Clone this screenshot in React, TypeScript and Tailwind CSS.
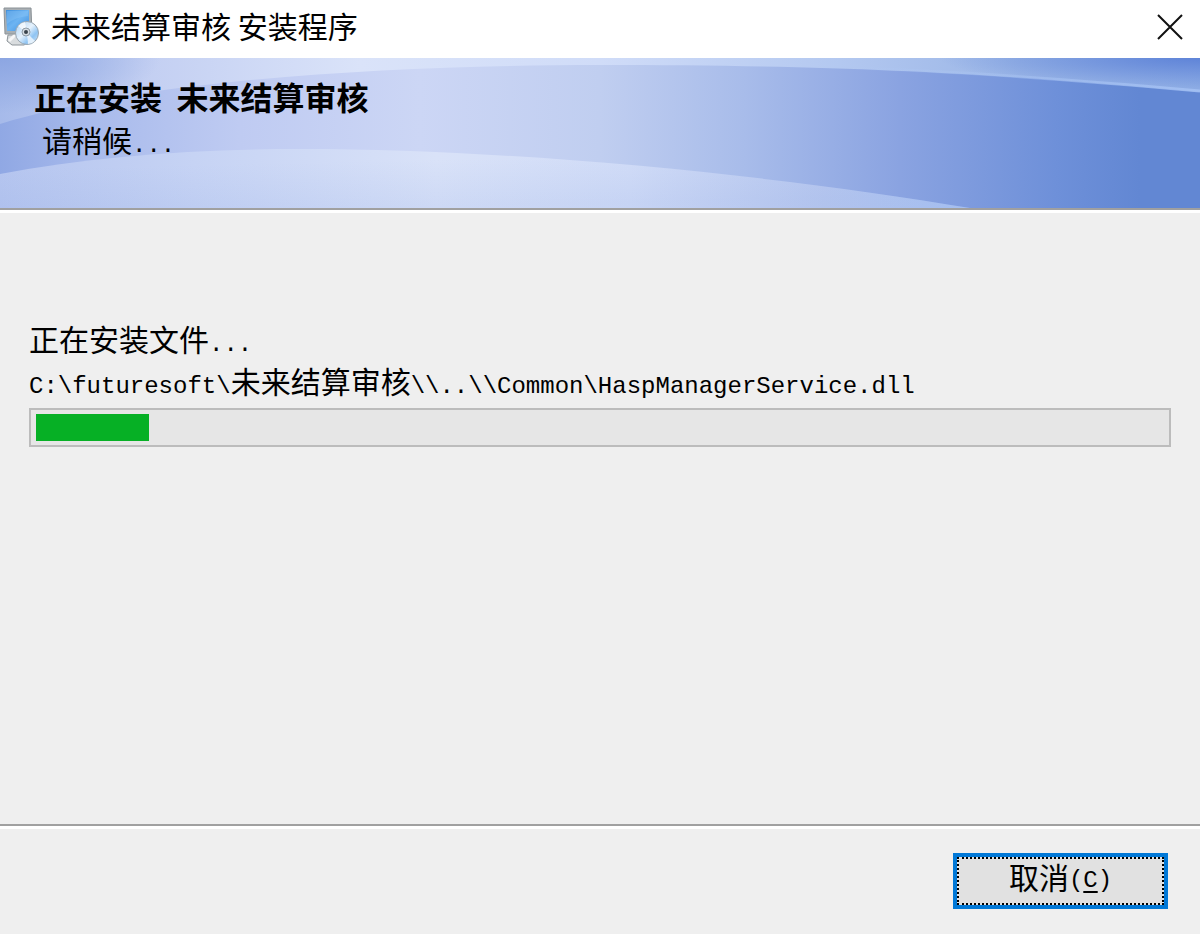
import { ReactNode } from 'react';

const INSTALL_PROGRESS = 10;

function Latin({ children }: { children: ReactNode }) {
  return <span className="text-[24px]">{children}</span>;
}

function SetupIcon() {
  return (
    <svg viewBox="0 0 36 40" className="h-10 w-9 shrink-0" aria-hidden="true">
      <defs>
        <linearGradient id="screen" x1="0" y1="0" x2="1" y2="1">
          <stop offset="0" stopColor="#3f8fdc" />
          <stop offset="0.5" stopColor="#6db4f2" />
          <stop offset="1" stopColor="#3d8ede" />
        </linearGradient>
        <linearGradient id="disc" x1="0" y1="0" x2="1" y2="1">
          <stop offset="0" stopColor="#a9d0f4" />
          <stop offset="0.45" stopColor="#e6f2fc" />
          <stop offset="0.7" stopColor="#8fc4f3" />
          <stop offset="1" stopColor="#d3e6f6" />
        </linearGradient>
      </defs>
      <path d="M5 28h14l5 8-3 2H9l-5-4z" fill="#d9dcde" stroke="#8d9499" strokeWidth="1" />
      <path d="M13 27 6 34" stroke="#f7f7f7" strokeWidth="3" />
      <path d="M1 1h27l1 26H2z" fill="#a9afb3" stroke="#8b9297" strokeWidth="1" />
      <path d="M3 3h23v21H4z" fill="url(#screen)" />
      <path d="M4 4h21v5Q12 10 4 17z" fill="#8cc6f7" opacity="0.4" />
      <circle cx="24" cy="26" r="11.5" fill="url(#disc)" stroke="#9aa5ae" strokeWidth="1" />
      <path d="M24 26 15 19a11 11 0 0 1 7-4z" fill="#fff" opacity="0.7" />
      <path d="M24 26 32 34a11 11 0 0 1-7 3z" fill="#fff" opacity="0.7" />
      <circle cx="23" cy="25" r="4" fill="#d5dce2" stroke="#8d9aa5" strokeWidth="1" />
      <circle cx="23" cy="25" r="2" fill="#39434b" />
    </svg>
  );
}

function BannerWaves() {
  return (
    <svg
      viewBox="0 0 1200 150"
      preserveAspectRatio="none"
      className="absolute inset-0 h-full w-full"
      aria-hidden="true"
    >
      <defs>
        <linearGradient id="base">
          <stop offset="0" stopColor="#90a8e4" />
          <stop offset="0.08" stopColor="#a9bbec" />
          <stop offset="0.2" stopColor="#bfcbf2" />
          <stop offset="0.35" stopColor="#ccd6f5" />
          <stop offset="0.5" stopColor="#c0cef0" />
          <stop offset="0.62" stopColor="#a8bcea" />
          <stop offset="0.75" stopColor="#8aa3e1" />
          <stop offset="0.88" stopColor="#6e90d9" />
          <stop offset="0.95" stopColor="#6287d3" />
          <stop offset="1" stopColor="#6287d3" />
        </linearGradient>
        <linearGradient id="top">
          <stop offset="0" stopColor="#a6baea" />
          <stop offset="0.12" stopColor="#c3cff2" />
          <stop offset="0.3" stopColor="#dae3f9" />
          <stop offset="0.5" stopColor="#d0dcf8" />
          <stop offset="0.7" stopColor="#b3c8f0" />
          <stop offset="0.85" stopColor="#9ab5e6" />
          <stop offset="1" stopColor="#8cabe4" />
        </linearGradient>
        {/* darker corners along the top edge */}
        <radialGradient id="cornerRight" gradientUnits="userSpaceOnUse" cx="0" cy="0" r="1" gradientTransform="translate(1200 0) scale(260 30)">
          <stop offset="0" stopColor="#5f84d8" />
          <stop offset="1" stopColor="#5f84d8" stopOpacity="0" />
        </radialGradient>
        <radialGradient id="cornerLeft" gradientUnits="userSpaceOnUse" cx="0" cy="0" r="1" gradientTransform="scale(160 55)">
          <stop offset="0" stopColor="#8ca6e2" />
          <stop offset="1" stopColor="#8ca6e2" stopOpacity="0" />
        </radialGradient>
        <linearGradient id="bottom">
          <stop offset="0" stopColor="#b5c5ef" />
          <stop offset="0.2" stopColor="#c6d3f4" />
          <stop offset="0.45" stopColor="#d9e2f8" />
          <stop offset="0.65" stopColor="#d1dcf7" />
          <stop offset="0.85" stopColor="#b8c8ef" />
          <stop offset="1" stopColor="#a8c2f2" />
        </linearGradient>
        <linearGradient id="bottomShade" x1="0" y1="0" x2="0.35" y2="1">
          <stop offset="0" stopColor="#8ba6e4" stopOpacity="0" />
          <stop offset="0.3" stopColor="#8ba6e4" stopOpacity="0" />
          <stop offset="1" stopColor="#8ba6e4" stopOpacity="0.15" />
        </linearGradient>
        <linearGradient id="edge">
          <stop offset="0.4" stopColor="#b4cdf8" stopOpacity="0" />
          <stop offset="1" stopColor="#a6c3f5" stopOpacity="0.8" />
        </linearGradient>
      </defs>
      <rect width="1200" height="150" fill="url(#base)" />
      <path d="M0 0H1200V34C1000 16 850 7 600 7C400 7 150 20 0 66Z" fill="url(#top)" />
      <path d="M0 0H1200V34C1000 16 850 7 600 7C400 7 150 20 0 66Z" fill="url(#cornerRight)" />
      <path d="M0 0H1200V34C1000 16 850 7 600 7C400 7 150 20 0 66Z" fill="url(#cornerLeft)" />
      <path
        d="M600 6C850 6 1000 15 1200 33"
        fill="none"
        stroke="url(#edge)"
        strokeWidth="3"
      />
      <path d="M0 116C90 99 190 91 300 91C520 91 780 118 970 150H0Z" fill="url(#bottom)" />
      <path d="M0 116C90 99 190 91 300 91C520 91 780 118 970 150H0Z" fill="url(#bottomShade)" />
    </svg>
  );
}

export default function App() {
  return (
    <div className="flex min-h-screen flex-col bg-[#efefef] font-['Liberation_Mono','Noto_Sans_CJK_SC',monospace] text-[30px] leading-10 text-black">
      {/* Title bar */}
      <header className="flex h-[58px] items-center justify-between bg-white pb-1 pl-[3px] pr-4">
        <div className="flex items-center gap-3">
          <SetupIcon />
          <span className="pb-1 font-['Noto_Sans_CJK_SC',sans-serif]">未来结算审核 安装程序</span>
        </div>
        <button type="button" aria-label="关闭" className="p-0">
          <svg viewBox="0 0 28 28" className="h-7 w-7" aria-hidden="true">
            <path d="M2 2 26 26M26 2 2 26" stroke="#111" strokeWidth="2" />
          </svg>
        </button>
      </header>

      {/* Banner */}
      <section className="relative h-[150px]">
        <BannerWaves />
        <div className="relative pl-[34px] pt-6">
          <h1 className="text-[32px] font-bold">
            正在安装<Latin> </Latin>未来结算审核
          </h1>
          <p className="pl-2">
            请稍候<Latin>...</Latin>
          </p>
        </div>
      </section>
      <div className="h-[5px] border-t-2 border-[#a0a0a0] bg-white" />

      {/* Progress */}
      <main className="flex-1 px-[29px] pt-[110px]">
        <p id="status">
          正在安装文件<Latin>...</Latin>
        </p>
        <p className="whitespace-nowrap">
          <Latin>C:\futuresoft\</Latin>未来结算审核<Latin>{'\\\\..\\\\Common\\HaspManagerService.dll'}</Latin>
        </p>
        <progress
          aria-labelledby="status"
          value={INSTALL_PROGRESS}
          max={100}
          className="mt-px block h-[39px] w-full appearance-none border-2 border-[#bcbcbc] bg-[#e6e6e6] px-[5px] py-1 [&::-webkit-progress-bar]:bg-[#e6e6e6] [&::-webkit-progress-value]:bg-[#06b025]"
        />
      </main>

      {/* Footer */}
      <div className="h-[5px] border-t-2 border-[#a0a0a0] bg-white" />
      <footer className="flex h-[105px] justify-end px-8 pt-6">
        <button
          type="button"
          className="h-14 w-[215px] border-4 border-[#0078d7] bg-[#e1e1e1]"
        >
          <span className="flex h-full items-center justify-center border-2 border-dotted border-black">
            取消
            <Latin>
              (<span className="underline underline-offset-4">C</span>)
            </Latin>
          </span>
        </button>
      </footer>
    </div>
  );
}
